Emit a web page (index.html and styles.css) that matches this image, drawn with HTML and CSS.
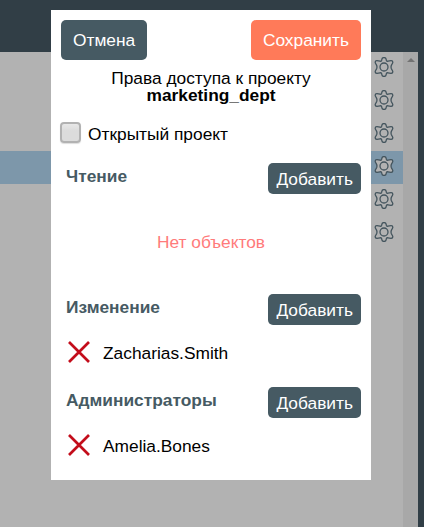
FILE: index.html
```
<!DOCTYPE html>
<html lang="ru">
<head>
<meta charset="utf-8">
<title>Права доступа</title>
<link rel="stylesheet" href="styles.css">
</head>
<body>
<svg width="0" height="0" class="defs">
  <symbol id="gear" viewBox="-10 -10 20 20">
    <path d="M-2-8.2Q-1.8-9.4 0-9.4T2-8.2L2.4-6.6Q2.8-5.6 4-5.8L7-6.3Q8.7-6.4 8.8-4.9Q8.9-4 8-2.9L7.3-1.5Q6.8 0 7.3 1.5L8 2.9Q8.9 4 8.8 4.9Q8.7 6.4 7 6.3L4 5.8Q2.8 5.6 2.4 6.6L2 8.2Q1.8 9.4 0 9.4T-2 8.2L-2.4 6.6Q-2.8 5.6-4 5.8L-7 6.3Q-8.7 6.4-8.8 4.9Q-8.9 4-8 2.9L-7.3 1.5Q-6.8 0-7.3-1.5L-8-2.9Q-8.9-4-8.8-4.9Q-8.7-6.4-7-6.3L-4-5.8Q-2.8-5.6-2.4-6.6Z"/>
    <circle r="4"/>
  </symbol>
  <symbol id="cross" viewBox="0 0 24 24"><path d="M2 2L22 22M22 2L2 22"/></symbol>
</svg>
<div class="page">
  <header class="topbar"></header>
  <div class="content">
    <div class="list">
      <div class="row"><svg class="gear"><use href="#gear"/></svg></div>
      <div class="row"><svg class="gear"><use href="#gear"/></svg></div>
      <div class="row"><svg class="gear"><use href="#gear"/></svg></div>
      <div class="row selected"><svg class="gear"><use href="#gear"/></svg></div>
      <div class="row"><svg class="gear"><use href="#gear"/></svg></div>
      <div class="row"><svg class="gear"><use href="#gear"/></svg></div>
    </div>
    <div class="scrollbar"><span class="arrow"></span></div>
  </div>
</div>
<div class="dialog">
  <div class="actions">
    <button class="btn">Отмена</button>
    <button class="btn save">Сохранить</button>
  </div>
  <div class="title">Права доступа к проекту<br><b>marketing_dept</b></div>
  <label class="open"><span class="check"></span>Открытый проект</label>
  <section class="reading">
    <div class="head"><h2>Чтение</h2><button class="btn add">Добавить</button></div>
    <div class="empty">Нет объектов</div>
  </section>
  <section class="group">
    <div class="head"><h2>Изменение</h2><button class="btn add">Добавить</button></div>
    <div class="user"><svg class="cross"><use href="#cross"/></svg><span class="name">Zacharias.Smith</span></div>
  </section>
  <section class="group">
    <div class="head"><h2>Администраторы</h2><button class="btn add">Добавить</button></div>
    <div class="user"><svg class="cross"><use href="#cross"/></svg><span class="name">Amelia.Bones</span></div>
  </section>
</div>
</body>
</html>
```
FILE: styles.css
```
* { box-sizing: border-box; }
body {
  margin: 0;
  height: 527px;
  overflow: hidden;
  font: 17.33px/17px "Liberation Sans", Arial, sans-serif;
  color: #000;
}
.defs { position: absolute; }
.page {
  height: 527px;
  display: flex;
  flex-direction: column;
  background: #313e46;
}
.topbar { height: 52px; }
.content { flex: 1; display: flex; margin-right: 6px; }
.list { flex: 1; background: #b2b2b2; }
.row {
  height: 33px;
  display: flex;
  justify-content: flex-end;
  padding: 5px 9px 0 0;
}
.selected { background: #7d97aa; }
.gear {
  width: 20px;
  height: 20px;
  fill: none;
  stroke: #43545d;
  stroke-width: 1.3;
}
.selected .gear { fill: #b2b2b2; }
.scrollbar { width: 15px; background: #a8a8a8; padding: 6px 0 0 4px; }
.arrow {
  display: block;
  width: 0;
  border: 4px solid transparent;
  border-top: 0;
  border-bottom-color: #727272;
}
.dialog {
  position: absolute;
  left: 51px;
  top: 10px;
  width: 320px;
  height: 470px;
  padding: 10px;
  background: #fff;
}
.actions { display: flex; justify-content: space-between; }
.btn {
  height: 40px;
  padding: 0 12px;
  border: 0;
  border-radius: 5px;
  background: #465a63;
  color: #fff;
  font: inherit;
}
.save { background: #ff7a59; }
.title { margin-top: 10px; text-align: center; }
.open { display: flex; align-items: center; height: 22px; margin-top: 19px; }
.check {
  width: 21px;
  height: 21px;
  margin: 0 7px 3px -1px;
  border: 2px solid #b2b2b2;
  border-radius: 4px;
  background: linear-gradient(#e8e8e8, #dcdcdc 40%);
  box-shadow: 0 1px 1px #ddd;
}
.reading { height: 131px; margin-top: 18px; }
.group { height: 93px; }
.head {
  display: flex;
  justify-content: space-between;
  padding-left: 5px;
}
h2 { margin: 5px 0 0; font-size: 17.33px; line-height: 17px; color: #465a63; }
.add { height: 31px; padding: 2px 8px 0; }
.empty { margin-top: 40px; text-align: center; color: #ff7b7b; }
.user { display: flex; align-items: center; margin: 15px 0 0 6px; height: 24px; }
.name { padding-top: 2px; }
.cross {
  width: 24px;
  height: 24px;
  margin-right: 12px;
  stroke: #c30d1b;
  stroke-width: 2.7;
}
```
